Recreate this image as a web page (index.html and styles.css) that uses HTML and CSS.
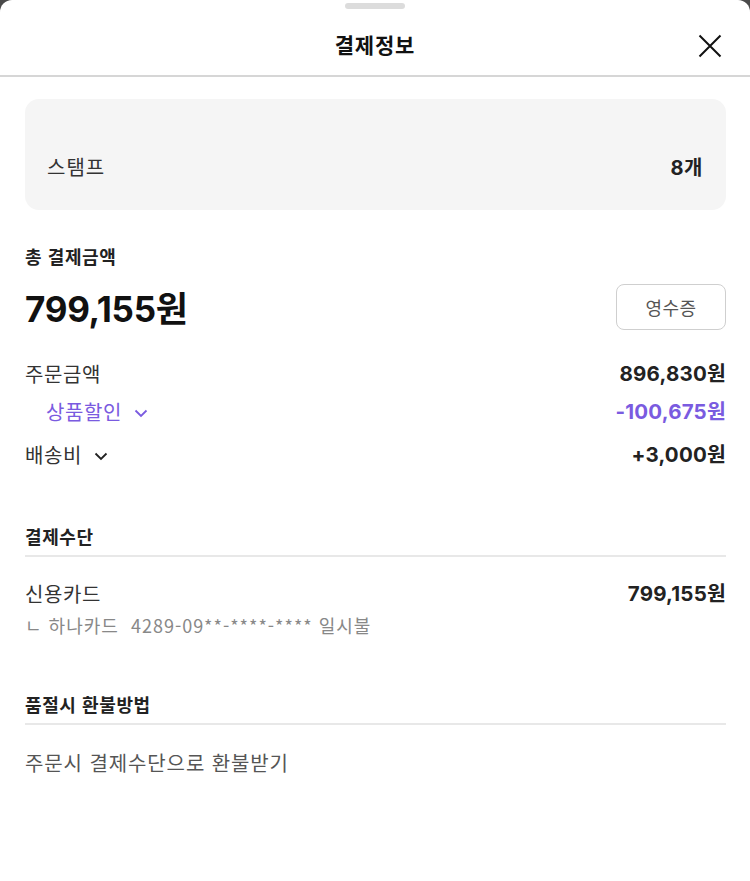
FILE: index.html
```html
<!DOCTYPE html>
<html lang="ko">
<head>
<meta charset="utf-8">
<title>결제정보</title>
<link rel="stylesheet" href="styles.css">
</head>
<body>
<div class="sheet">
  <div class="handle"></div>
  <header class="header">
    <h1 class="title">결제정보</h1>
    <button class="close" aria-label="닫기">
      <svg width="24" height="24" viewBox="0 0 24 24"><path d="M1.5 1.5L22.5 22.5M22.5 1.5L1.5 22.5" stroke="#111" stroke-width="2" fill="none"/></svg>
    </button>
  </header>
  <main class="content">
    <div class="stamp-card">
      <span class="stamp-label">스탬프</span>
      <span class="stamp-value">8개</span>
    </div>

    <section class="total">
      <div class="section-title">총 결제금액</div>
      <div class="total-row">
        <span class="total-amount">799,155원</span>
        <button class="receipt">영수증</button>
      </div>
      <div class="rows">
        <div class="row">
          <span class="label">주문금액</span>
          <span class="value">896,830원</span>
        </div>
        <div class="row discount">
          <span class="label sub">상품할인 <svg class="chev" width="14" height="9" viewBox="0 0 14 9"><path d="M1.5 1.5L7 7L12.5 1.5" stroke="#7a5be0" stroke-width="1.8" fill="none"/></svg></span>
          <span class="value">-100,675원</span>
        </div>
        <div class="row shipping">
          <span class="label">배송비 <svg class="chev" width="14" height="9" viewBox="0 0 14 9"><path d="M1.5 1.5L7 7L12.5 1.5" stroke="#222" stroke-width="1.8" fill="none"/></svg></span>
          <span class="value">+3,000원</span>
        </div>
      </div>
    </section>

    <section class="block">
      <div class="block-title">결제수단</div>
      <div class="row method">
        <span class="label">신용카드</span>
        <span class="value">799,155원</span>
      </div>
      <div class="card-info">ㄴ 하나카드&nbsp; 4289-09**-****-**** 일시불</div>
    </section>

    <section class="block">
      <div class="block-title">품절시 환불방법</div>
      <div class="refund">주문시 결제수단으로 환불받기</div>
    </section>
  </main>
</div>
</body>
</html>
```

FILE: styles.css
```css
* { box-sizing: border-box; }
html, body { margin: 0; padding: 0; }
body {
  background: #4a4a4a;
  font-family: "Inter", "Noto Sans CJK KR", sans-serif;
  color: #222;
}
.sheet {
  background: #fff;
  width: 750px;
  min-height: 881px;
  border-radius: 12px 12px 0 0;
  position: relative;
}
.handle {
  position: absolute;
  top: 3px;
  left: 345px;
  width: 60px;
  height: 6px;
  border-radius: 3px;
  background: #dcdcdc;
}
.header {
  height: 77px;
  border-bottom: 2px solid #d6d6d6;
  display: flex;
  align-items: center;
  justify-content: center;
  position: relative;
  padding-top: 13px;
}
.title {
  margin: 0;
  font-size: 21px;
  font-weight: 700;
  letter-spacing: 0.8px;
  font-family: "Noto Sans CJK KR", sans-serif;
  color: #111;
}
.close {
  position: absolute;
  right: 28px;
  top: 34px;
  background: none;
  border: 0;
  padding: 0;
  width: 24px;
  height: 24px;
}
.content {
  padding: 22px 24px 0 25px;
}
.stamp-card {
  background: #f5f5f5;
  border-radius: 14px;
  height: 111px;
  padding: 53px 23px 0 22px;
  display: flex;
  justify-content: space-between;
  align-items: flex-start;
  font-size: 20px;
}
.stamp-label { color: #333; font-family: "Noto Sans CJK KR", sans-serif; letter-spacing: 1px; }
.stamp-value { font-weight: 700; color: #222; letter-spacing: 0.5px; }
.total { margin-top: 33px; }
.section-title, .block-title {
  font-size: 18px;
  font-weight: 700;
  letter-spacing: 0.6px;
  font-family: "Noto Sans CJK KR", sans-serif;
  color: #222;
  line-height: 26px;
}
.total-row {
  display: flex;
  justify-content: space-between;
  align-items: center;
  margin-top: 12px;
}
.total-amount {
  font-size: 35px;
  font-weight: 700;
  color: #111;
  letter-spacing: -0.3px;
}
.receipt {
  width: 110px;
  height: 46px;
  border: 1px solid #cfcfcf;
  background: #fff;
  border-radius: 8px;
  font-family: "Noto Sans CJK KR", sans-serif;
  font-size: 18px;
  letter-spacing: 0.5px;
  color: #555;
}
.rows {
  margin-top: 28px;
  display: flex;
  flex-direction: column;
}
.row {
  display: flex;
  justify-content: space-between;
  align-items: center;
  line-height: 28px;
}
.discount { margin-top: 10px; }
.shipping { margin-top: 15px; }
.label {
  font-size: 20px;
  color: #333;
  letter-spacing: 0.6px;
  font-family: "Noto Sans CJK KR", sans-serif;
  display: flex;
  align-items: center;
  gap: 12px;
}
.label.sub { padding-left: 21px; }
.value {
  font-size: 20.5px;
  font-weight: 700;
  color: #222;
  letter-spacing: 0.2px;
}
.discount .label, .discount .value { color: #7a5be0; }
.chev { margin-top: 2px; }
.block { margin-top: 54px; }
.block + .block { margin-top: 53px; }
.block-title {
  padding-bottom: 6px;
  border-bottom: 2px solid #e8e8e8;
}
.method { margin-top: 23px; }
.card-info {
  margin-top: 4px;
  font-size: 18px;
  letter-spacing: 1px;
  color: #888;
  font-family: "Noto Sans CJK KR", sans-serif;
}
.refund {
  margin-top: 23px;
  font-size: 20px;
  letter-spacing: 0.9px;
  color: #555;
  font-family: "Noto Sans CJK KR", sans-serif;
}
```
